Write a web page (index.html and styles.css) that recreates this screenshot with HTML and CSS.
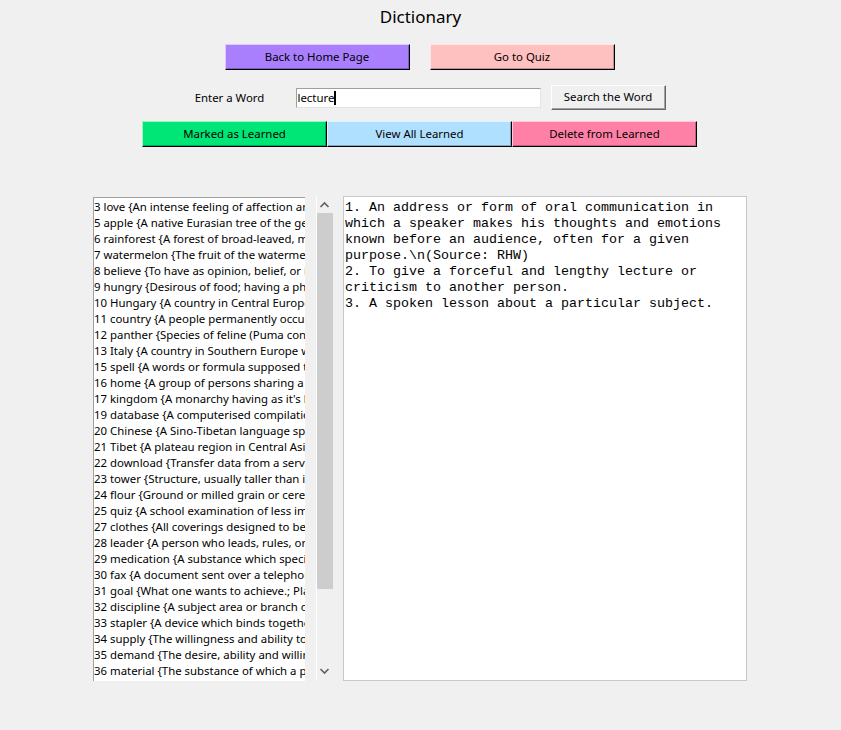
FILE: index.html
```html
<!DOCTYPE html>
<html lang="en">
<head>
    <meta charset="UTF-8">
    <title>Dictionary</title>
    <link rel="stylesheet" href="styles.css">
</head>
<body>
    <div class="title">Dictionary</div>

    <div class="nav-row">
        <button class="btn purple">Back to Home Page</button>
        <button class="btn pink">Go to Quiz</button>
    </div>

    <div class="search-row">
        <label class="word-label" for="word">Enter a Word</label>
        <div class="entry"><span id="word">lecture</span><span class="caret"></span></div>
        <button class="btn plain">Search the Word</button>
    </div>

    <div class="learn-row">
        <button class="btn green">Marked as Learned</button>
        <button class="btn blue">View All Learned</button>
        <button class="btn rose">Delete from Learned</button>
    </div>

    <div class="main">
        <ul class="listbox">
            <li>3 love {An intense feeling of affection and care towards another person}</li>
            <li>5 apple {A native Eurasian tree of the genus Malus}</li>
            <li>6 rainforest {A forest of broad-leaved, mostly evergreen trees}</li>
            <li>7 watermelon {The fruit of the watermelon plant}</li>
            <li>8 believe {To have as opinion, belief, or impression}</li>
            <li>9 hungry {Desirous of food; having a physical need for food}</li>
            <li>10 Hungary {A country in Central Europe}</li>
            <li>11 country {A people permanently occupying a fixed territory}</li>
            <li>12 panther {Species of feline (Puma concolor)}</li>
            <li>13 Italy {A country in Southern Europe with its capital in Rome}</li>
            <li>15 spell {A words or formula supposed to have magical power}</li>
            <li>16 home {A group of persons sharing a living place}</li>
            <li>17 kingdom {A monarchy having as it's head a king}</li>
            <li>19 database {A computerised compilation of data}</li>
            <li>20 Chinese {A Sino-Tibetan language spoken in China}</li>
            <li>21 Tibet {A plateau region in Central Asia}</li>
            <li>22 download {Transfer data from a server to a computer}</li>
            <li>23 tower {Structure, usually taller than it is wide}</li>
            <li>24 flour {Ground or milled grain or cereal}</li>
            <li>25 quiz {A school examination of less importance}</li>
            <li>27 clothes {All coverings designed to be worn on the body}</li>
            <li>28 leader {A person who leads, rules, or is in front}</li>
            <li>29 medication {A substance which specifically treats a disease}</li>
            <li>30 fax {A document sent over a telephone line}</li>
            <li>31 goal {What one wants to achieve.; Place to score}</li>
            <li>32 discipline {A subject area or branch of study}</li>
            <li>33 stapler {A device which binds together sheets of paper}</li>
            <li>34 supply {The willingness and ability to sell goods}</li>
            <li>35 demand {The desire, ability and willingness to buy}</li>
            <li>36 material {The substance of which a product is made}</li>
        </ul>
        <div class="scrollbar">
            <svg class="arrow" width="16" height="17" viewBox="0 0 16 17"><path d="M3.5 11 L7.5 7 L11.5 11" fill="none" stroke="#606060" stroke-width="1.6"/></svg>
            <div class="track"><div class="thumb"></div></div>
            <svg class="arrow" width="16" height="17" viewBox="0 0 16 17"><path d="M3.5 6 L7.5 10 L11.5 6" fill="none" stroke="#606060" stroke-width="1.6"/></svg>
        </div>
        <div class="meaning">1. An address or form of oral communication in
which a speaker makes his thoughts and emotions
known before an audience, often for a given
purpose.\n(Source: RHW)
2. To give a forceful and lengthy lecture or
criticism to another person.
3. A spoken lesson about a particular subject.</div>
    </div>
</body>
</html>
```

FILE: styles.css
```css
body {
    margin: 0;
    background-color: #f0f0f0;
    font-family: 'Noto Sans', sans-serif;
    font-size: 11.4px;
    color: #000;
}
.title {
    margin-top: 6px;
    height: 22px;
    line-height: 22px;
    text-align: center;
    font-size: 17px;
}
.btn {
    font-family: 'Noto Sans', sans-serif;
    font-size: 11.4px;
    color: #000;
    padding: 0 0 2px 0;
    border: 1px solid;
    border-color: rgba(255, 255, 255, 0.6) #000 #000 rgba(255, 255, 255, 0.6);
    box-shadow: inset -1px -1px 0 rgba(0, 0, 0, 0.25);
    height: 26px;
    width: 185px;
}
.purple { background-color: #a97ffe; }
.pink { background-color: #ffc0c0; }
.green { background-color: #00e676; }
.blue { background-color: #b0e0ff; }
.rose { background-color: #ff80a6; }
.plain {
    background-color: #f0f0f0;
    width: 115px;
    height: 25px;
    border-color: #fff #696969 #696969 #fff;
    box-shadow: inset -1px -1px 0 #a0a0a0;
}
.nav-row {
    margin-top: 16px;
    display: flex;
    justify-content: center;
    gap: 20px;
    padding-right: 2px;
}
.search-row {
    margin-top: 15px;
    display: flex;
    justify-content: center;
    align-items: center;
    padding-right: 12px;
}
.word-label {
    width: 132px;
    text-align: center;
}
.entry {
    width: 242px;
    height: 18px;
    line-height: 18px;
    background: #fff;
    border: 1px solid;
    border-color: #a0a0a0 #e3e3e3 #e3e3e3 #a0a0a0;
    padding-left: 1px;
    margin-right: 10px;
    display: flex;
    align-items: center;
}
.caret {
    display: inline-block;
    width: 2px;
    height: 14px;
    background: #000;
}
.learn-row {
    margin-top: 11px;
    display: flex;
    justify-content: center;
    padding-right: 2px;
}
.main {
    margin-top: 49px;
    display: flex;
    align-items: flex-start;
    padding-left: 93px;
}
.listbox {
    list-style: none;
    margin: 1px 0 0 0;
    padding: 1px 0 0 0;
    box-sizing: border-box;
    width: 212px;
    height: 484px;
    background: #fff;
    border-top: 1px solid #a0a0a0;
    border-left: 1px solid #a0a0a0;
    overflow: hidden;
    white-space: nowrap;
}
.listbox li {
    height: 16px;
    line-height: 16px;
}
.scrollbar {
    margin-left: 11px;
    width: 16px;
    height: 484px;
    border-left: 1px solid #fff;
    display: flex;
    flex-direction: column;
}
.arrow {
    display: block;
    flex: none;
}
.track {
    flex: 1;
    position: relative;
}
.thumb {
    position: absolute;
    left: 0;
    right: 0;
    top: 0;
    height: 376px;
    background: #cdcdcd;
}
.meaning {
    margin-left: 10px;
    background: #fff;
    border: 1px solid #c8c8c8;
    padding: 3px 0 0 1px;
    box-sizing: border-box;
    height: 485px;
    width: 404px;
    white-space: pre;
    font-family: 'Liberation Mono', monospace;
    font-size: 13.33px;
    line-height: 16px;
}
```
